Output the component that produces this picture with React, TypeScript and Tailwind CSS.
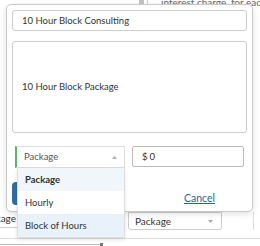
const options = [
  { label: "Package", selected: true, hover: false },
  { label: "Hourly", selected: false, hover: false },
  { label: "Block of Hours", selected: false, hover: true },
];

const App = () => {
  return (
    <div className="relative w-[260px] h-[246px] overflow-hidden bg-white font-['Lato',sans-serif] text-[9.5px] leading-none text-[#555]">
      {/* page behind the dialog */}
      <div className="flex flex-col h-full">
        <div className="flex h-[212px]">
          <div className="w-[6px] overflow-hidden flex flex-col whitespace-nowrap">
            <p className="mt-[10px] text-[10px]">From</p>
            <p className="mt-[26px] text-[10px]">.com</p>
            <p className="mt-[10px] text-[10px]">email</p>
            <p className="mt-[2px] text-[10px] underline">t.com</p>
            <p className="mt-[20px] text-[11px] text-[#2a6aa0]">Options</p>
            <div className="mt-[25px] border-t border-[#ddd]" />
            <div className="mt-[27px] h-[22px] border-y border-[#ccc] flex items-center text-[10px]">
              ag
            </div>
          </div>
          <div className="flex-1 flex items-start">
            <div className="ml-[139px] w-[5px] h-[5px] bg-[#c4c4c4]" />
            <div className="ml-[3px] w-px h-[6px] bg-[#ccc]" />
            <p className="ml-[13px] -mt-[3px] text-[10px] whitespace-nowrap text-[#666]">
              interest charge, for each
            </p>
          </div>
          <div className="w-[7px] overflow-hidden flex flex-col whitespace-nowrap text-[10px]">
            <p className="mt-[10px]">or</p>
            <p className="mt-[1px]">t</p>
            <p className="mt-[1px]">oll</p>
            <div className="mt-[49px] border-t border-[#ddd]" />
            <div className="mt-[69px] border-t border-[#ddd]" />
            <div className="mt-[39px] border-t border-[#ddd]" />
          </div>
        </div>
        <div className="flex h-[16px]">
          <div className="w-[18px] -mt-[3px] border-r border-b border-[#ccc] flex items-center justify-end pr-px text-[10px] text-[#333] overflow-hidden">
            kage
          </div>
          <div className="ml-[110px] w-[94px] h-[18px] border border-[#ccc] rounded-b-[3px] flex items-center justify-between pl-[6px] pr-[8px] text-[10px] text-[#333]">
            Package
            <svg width="5" height="3" viewBox="0 0 5 3">
              <path d="M0 0h5L2.5 3z" fill="#aaa" />
            </svg>
          </div>
          <div className="ml-[31px] w-px h-[18px] bg-[#ddd]" />
        </div>
        <div className="mt-[10px] border-t border-[#ddd]" />
        <div className="mt-[4px] flex items-center">
          <div className="w-[100px] h-px bg-[#bbb]" />
          <div className="w-[3px] h-[3px] bg-[#777]" />
        </div>
      </div>

      {/* dialog */}
      <div className="absolute left-[6px] top-[4px] w-[247px] h-[208px] rounded-[5px] border border-[#c9c9c9] bg-white shadow-[0_2px_6px_rgba(0,0,0,0.12)] px-[5px] pt-[5px] text-[#333]">
        <div className="h-[21px] border border-[#ccc] rounded-[3px] flex items-center px-[9px]">
          10 Hour Block Consulting
        </div>
        <div className="mt-[10px] h-[92px] border border-[#ccc] rounded-[3px] flex items-center px-[9px]">
          10 Hour Block Package
        </div>
        <div className="mt-[13px] flex">
          <div className="relative ml-[3px] w-[110px]">
            <div className="h-[22px] border border-[#ddd] border-l-[2px] border-l-[#5cb85c] flex items-center justify-between pl-[7px] pr-[7px] text-[#555]">
              Package
              <svg width="5" height="3" viewBox="0 0 5 3">
                <path d="M0 3h5L2.5 0z" fill="#aaa" />
              </svg>
            </div>
            <div className="absolute left-[2px] right-0 top-full z-10 bg-white border border-t-0 border-[#ddd] rounded-b-[2px] shadow-[0_2px_4px_rgba(0,0,0,0.1)]">
              {options.map((o) => (
                <div
                  key={o.label}
                  className={`h-[23px] flex items-center pl-[7px] text-[#333] ${
                    o.selected ? "font-bold bg-[#f1f6fb]" : o.hover ? "bg-[#e9f1fb]" : "bg-white"
                  }`}
                >
                  {o.label}
                </div>
              ))}
            </div>
          </div>
          <div className="ml-[7px] w-[112px] h-[21px] border border-[#bbb] rounded-[2px] flex items-center pl-[9px]">
            $<span className="ml-[2px]">0</span>
          </div>
        </div>
        <div className="mt-[14px] flex items-start">
          <button className="w-[60px] h-[23px] rounded-[4px] bg-[#2e6da4] text-white">
            Save
          </button>
          <a className="ml-auto mr-[32px] mt-[11px] text-[10.5px] text-[#2a6496] underline">
            Cancel
          </a>
        </div>
      </div>
    </div>
  );
};

export default App;
